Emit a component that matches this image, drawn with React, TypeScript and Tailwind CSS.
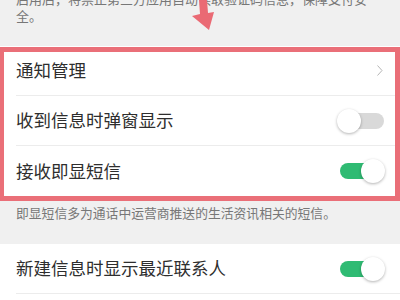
import React from 'react';

function Toggle({ on }: { on: boolean }) {
  return (
    <div className="relative w-[48px] h-[24px] flex items-center">
      <div className={`ml-[3px] w-[44px] h-[16px] rounded-full ${on ? 'bg-[#2fbb73]' : 'bg-[#d9d9d9]'}`} />
      <div
        className={`absolute top-0 w-[24px] h-[24px] rounded-full bg-white shadow-[0_1px_3px_rgba(0,0,0,0.3)] ${on ? 'right-0' : 'left-0'}`}
      />
    </div>
  );
}

function Row({ label, children, last }: { label: string; children: React.ReactNode; last?: boolean }) {
  return (
    <div className={`ml-4 h-[50px] flex items-center justify-between pr-[15px] ${last ? '' : 'border-b border-[#ececec]'}`}>
      <span className="text-[17.5px] text-[#2e2e2e]">{label}</span>
      {children}
    </div>
  );
}

export default function App() {
  return (
    <div className="relative w-[400px] h-[300px] overflow-hidden bg-[#f0f0f0] font-['Noto_Sans_CJK_SC','Noto_Sans',sans-serif]">
      <p className="-mt-[10px] px-4 text-[13px] leading-[17px] text-[#777]">
        启用后，将禁止第三方应用自动读取验证码信息，保障支付安全。
      </p>

      <div className="mt-[22px] bg-white">
        <Row label="通知管理">
          <svg width="6" height="11" viewBox="0 0 6 11" className="mr-[2px]">
            <path d="M0.5 0.5 L5 5.5 L0.5 10.5" fill="none" stroke="#b5b5b5" strokeWidth="1" />
          </svg>
        </Row>
        <Row label="收到信息时弹窗显示">
          <Toggle on={false} />
        </Row>
        <Row label="接收即显短信" last>
          <Toggle on />
        </Row>
      </div>

      <p className="pt-[8px] pb-[22px] px-4 text-[12.8px] leading-[18px] text-[#777]">
        即显短信多为通话中运营商推送的生活资讯相关的短信。
      </p>

      <div className="bg-white">
        <Row label="新建信息时显示最近联系人">
          <Toggle on />
        </Row>
        <div className="h-[50px]" />
      </div>

      {/* annotation overlay */}
      <div className="absolute left-0 right-0 top-[47px] h-[154px] border-y-[5px] border-l-4 border-r-[5px] border-[#ea6f78]" />
      <svg className="absolute left-[185px] top-0" width="35" height="35" viewBox="0 0 35 35">
        <polygon points="14,0 22,0 23,13 29,12 24,30 7,16 15,14" fill="#ea6a74" />
      </svg>
    </div>
  );
}
